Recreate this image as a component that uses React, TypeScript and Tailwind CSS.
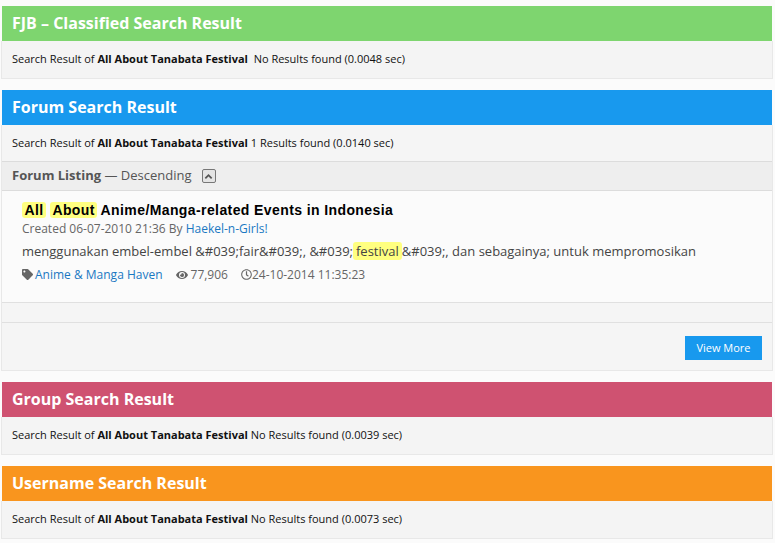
import { FaEye, FaRegClock, FaTag } from "react-icons/fa";

const font = "font-['Open_Sans','Noto_Sans',sans-serif]";

function SectionHeader({ title, color }: { title: string; color: string }) {
  return (
    <h2 className={`h-[35px] px-[10px] text-[16px] leading-[35px] font-bold text-white ${color}`}>
      {title}
    </h2>
  );
}

function Summary({ result, time, gap }: { result: string; time: string; gap?: boolean }) {
  return (
    <p className="h-[36px] px-[10px] text-[11px] leading-[36px] text-[#111]">
      Search Result of <b>All About Tanabata Festival</b>
      {gap ? "\u00a0 " : " "}
      {result} ({time} sec)
    </p>
  );
}

function TitleMark({ children }: { children: string }) {
  return <span className="mr-[-0.5px] rounded-[3px] bg-[#ffff80] px-[2.5px]">{children}</span>;
}

function EmptySection({ title, color, result, time, gap }: { title: string; color: string; result: string; time: string; gap?: boolean }) {
  return (
    <section className="mb-[11px]">
      <SectionHeader title={title} color={color} />
      <div className="mx-[-1px] border border-t-0 border-[#e8e8e8] bg-[#f4f4f4] pb-[1px]">
        <Summary result={result} time={time} gap={gap} />
      </div>
    </section>
  );
}

export default function App() {
  return (
    <main className={`h-[543px] overflow-hidden bg-[#fbfbfb] pt-[6px] pr-[3px] pl-[2px] ${font}`}>
      <EmptySection title="FJB – Classified Search Result" color="bg-[#7ed56f]" result="No Results found" time="0.0048" gap />

      <section className="mb-[11px]">
        <SectionHeader title="Forum Search Result" color="bg-[#1899ee]" />
        <div className="mx-[-1px] border border-t-0 border-[#e8e8e8] bg-[#f5f5f5]">
          <Summary result="1 Results found" time="0.0140" />
          <div className="flex h-[30px] items-center gap-[10px] border-y border-[#dcdcdc] bg-[#eeeeee] px-[10px] text-[13px] text-[#555]">
            <span>
              <b>Forum Listing</b> — Descending
            </span>
            <span className="flex h-[14px] w-[14px] items-center justify-center rounded-[2px] border border-[#777] bg-[#e4e4e4]">
              <svg viewBox="0 0 10 10" className="h-[9px] w-[9px]" fill="none" stroke="#555" strokeWidth="2">
                <path d="M1.5 7 5 3.5 8.5 7" />
              </svg>
            </span>
          </div>
          <article className="h-[112px] border-b border-[#e0e0e0] bg-[#fbfbfb] px-[20px] pt-[10px] text-[#666]">
            <h3 className="font-['Liberation_Sans',Arial,sans-serif] text-[14px] leading-[19px] font-bold tracking-[0.4px] text-black">
              <TitleMark>All</TitleMark> <TitleMark>About</TitleMark> Anime/Manga-related Events in Indonesia
            </h3>
            <p className="text-[12px] leading-[17px]">
              Created 06-07-2010 21:36 By <a className="text-[#1a78c2]">Haekel-n-Girls!</a>
            </p>
            <p className="mt-[5px] text-[13px] leading-[18px] whitespace-nowrap text-[#444]">
              menggunakan embel-embel &amp;#039;fair&amp;#039;, &amp;#039;<span className="rounded-[3px] bg-[#ffff80] px-[3px]">festival</span>&amp;#039;, dan sebagainya; untuk mempromosikan
            </p>
            <div className="mt-[6px] flex items-center text-[12px] leading-[17px]">
              <FaTag className="mr-[2px] h-[11px] w-[11px]" />
              <a className="text-[#1a78c2]">Anime &amp; Manga Haven</a>
              <FaEye className="mr-[3px] ml-[13px] h-[12px] w-[12px]" />
              <span>77,906</span>
              <FaRegClock className="ml-[13px] h-[11px] w-[11px]" />
              <span>24-10-2014 11:35:23</span>
            </div>
          </article>
          <div className="h-[20px] border-b border-[#e0e0e0]" />
          <div className="flex h-[47px] items-start justify-end px-[10px] pt-[13px]">
            <a className="flex h-[24px] w-[77px] items-center justify-center bg-[#1899ee] text-[11px] text-white">View More</a>
          </div>
        </div>
      </section>

      <EmptySection title="Group Search Result" color="bg-[#cf5271]" result="No Results found" time="0.0039" />
      <EmptySection title="Username Search Result" color="bg-[#f9951e]" result="No Results found" time="0.0073" />
    </main>
  );
}
